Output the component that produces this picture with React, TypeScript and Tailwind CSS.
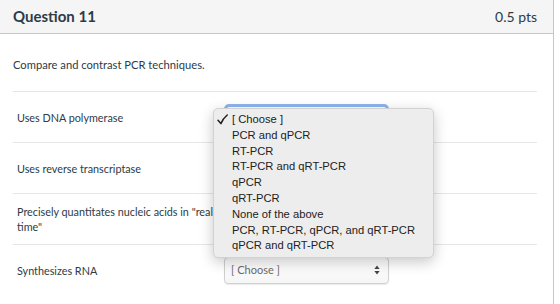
const options = [
  "[ Choose ]",
  "PCR and qPCR",
  "RT-PCR",
  "RT-PCR and qRT-PCR",
  "qPCR",
  "qRT-PCR",
  "None of the above",
  "PCR, RT-PCR, qPCR, and qRT-PCR",
  "qPCR and qRT-PCR",
];

const rows = [
  "Uses DNA polymerase",
  "Uses reverse transcriptase",
  'Precisely quantitates nucleic acids in "real-time"',
  "Synthesizes RNA",
];

function UpDown() {
  return (
    <svg width="6" height="10" viewBox="0 0 6 10" className="text-[#444]">
      <path d="M3 0.5 L5.6 4 H0.4 Z" fill="currentColor" />
      <path d="M3 9.5 L5.6 6 H0.4 Z" fill="currentColor" />
    </svg>
  );
}

function Check() {
  return (
    <svg width="11" height="11" viewBox="0 0 11 11" className="text-[#222]">
      <path
        d="M1 6.2 L3.9 9.6 Q6 4.5 10.2 1"
        fill="none"
        stroke="currentColor"
        strokeWidth="1.5"
        strokeLinecap="round"
        strokeLinejoin="round"
      />
    </svg>
  );
}

function SelectBox({ focused }: { focused?: boolean }) {
  return (
    <div
      className={
        focused
          ? "w-[165px] h-[27px] rounded-[5px] border-[3px] border-[#8db4ee] bg-white"
          : "w-[165px] h-[27px] rounded-[4px] border border-[#d0d0d0] bg-gradient-to-b from-white to-[#f6f6f6] shadow-[0_1px_1px_rgba(0,0,0,0.08)]"
      }
    >
      <div className="flex h-full items-center justify-between pl-[6px] pr-[8px]">
        <span className="text-[11px] text-[#6b6b6b]">[ Choose ]</span>
        <UpDown />
      </div>
    </div>
  );
}

function OptionMenu() {
  return (
    <div className="absolute left-[-11px] top-[4px] z-10 w-[221px] h-[150px] rounded-[5px] border border-[#d2d2d2] bg-[#ededed] py-[3px] shadow-[0_4px_14px_rgba(0,0,0,0.22)] font-['Liberation_Sans',Arial,sans-serif] text-[11.2px] text-[#222]">
      {options.map((opt, i) => (
        <div key={opt} className="flex h-[15.8px] items-center">
          <span className="flex w-[18px] pl-[3px]">{i === 0 && <Check />}</span>
          <span>{opt}</span>
        </div>
      ))}
    </div>
  );
}

export default function App() {
  return (
    <div className="w-[560px] h-[304px] bg-white font-['Lato',sans-serif] text-[#2d3b45] overflow-hidden">
      <div className="w-[554px] h-full border-r border-[#c4c8cc]">
        <div className="flex h-[34px] items-center justify-between border-b border-[#c4c8cc] bg-[#f5f5f5] pl-[13px] pr-[16px]">
          <span className="text-[15px] font-bold">Question 11</span>
          <span className="text-[14px]">0.5 pts</span>
        </div>

        <div className="pl-[13px] pr-[16px]">
          <p className="pt-[22px] pb-[18px] text-[11.2px] leading-[17px]">
            Compare and contrast PCR techniques.
          </p>

          <div>
            {rows.map((label, i) => (
              <div
                key={label}
                className="flex h-[51px] items-center border-t border-[#e6e6e6]"
              >
                <div className="w-[207px] pl-[4px] text-[10.8px] leading-[15px]">
                  {label}
                </div>
                <div className="relative ml-[4px]">
                  <SelectBox focused={i === 0} />
                  {i === 0 && <OptionMenu />}
                </div>
              </div>
            ))}
          </div>
        </div>
      </div>
    </div>
  );
}
